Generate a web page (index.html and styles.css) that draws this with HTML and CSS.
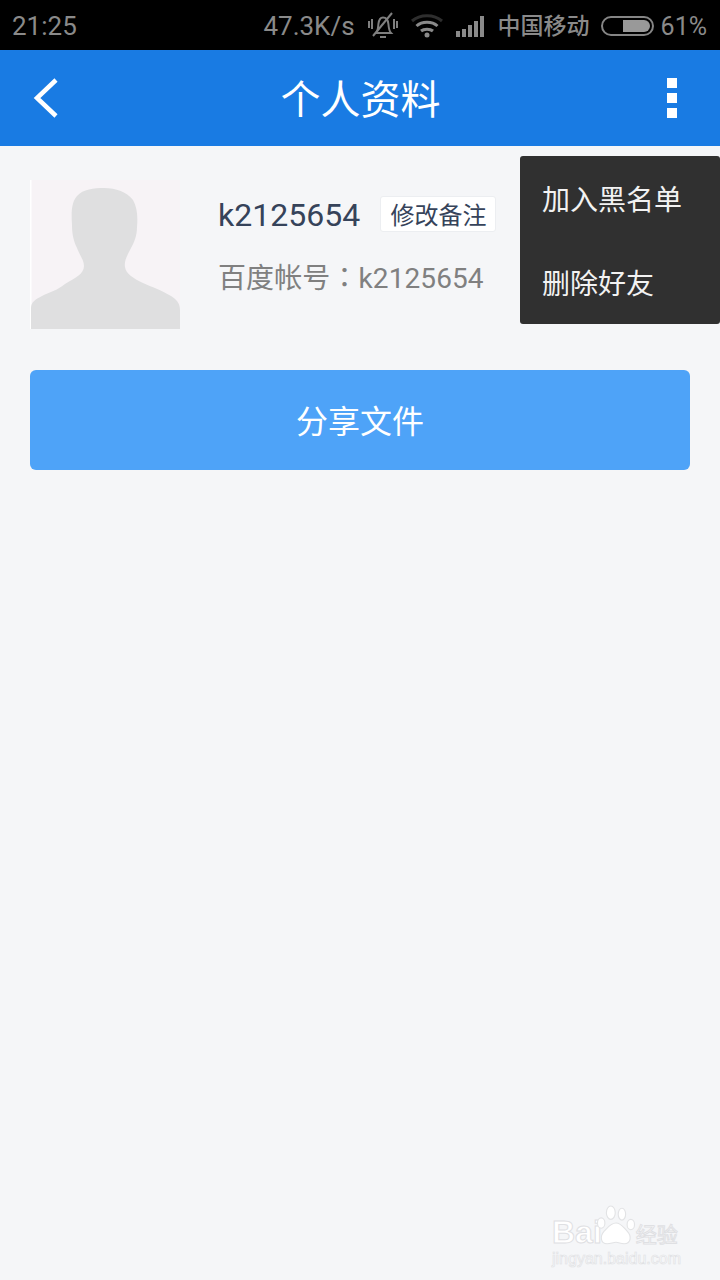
FILE: index.html
```html
<!DOCTYPE html>
<html lang="zh">
<head>
<meta charset="utf-8">
<title>个人资料</title>
<link rel="stylesheet" href="styles.css">
</head>
<body>
<div class="page">
  <div class="status">
    <span class="time">21:25</span>
    <div class="status-right">
      <span class="speed">47.3K/s</span>
      <svg class="ic-bell" width="30" height="28" viewBox="0 0 30 28" fill="none" stroke="#7f7f7f" stroke-width="2">
        <path d="M8 21c2-2 2-4 2.400-9 .5-4 2-6.500 4.600-6.500 3 0 5 2.500 5.400 6.500 .4 5 .6 7 2.600 9z"/>
        <path d="M12 25h6"/>
        <path d="M24 1L5 24"/>
        <path d="M1 9v7M4 7v10M26 7v10M29 9v7"/>
      </svg>
      <svg class="ic-wifi" width="32" height="24" viewBox="0 0 32 24" fill="none" stroke-width="3">
        <path d="M1 7C9 0 23 0 31 7" stroke="#2e2e2e"/>
        <path d="M5.500 12C11 7 21 7 26.500 12" stroke="#8a8a8a"/>
        <path d="M10 17C13 14.500 19 14.500 22 17" stroke="#8a8a8a"/>
        <circle cx="16" cy="21" r="2.500" fill="#8a8a8a" stroke="none"/>
      </svg>
      <div class="signal">
        <i class="b1"></i><i class="b2"></i><i class="b3"></i><i class="b4"></i><i class="b5"></i>
      </div>
      <span class="carrier">中国移动</span>
      <div class="battery"><i></i></div>
      <span class="pct">61%</span>
    </div>
  </div>
  <header class="bar">
    <svg class="back" width="26" height="40" viewBox="0 0 26 40" fill="none" stroke="#fff" stroke-width="4.500">
      <path d="M24 2L5 20l19 18"/>
    </svg>
    <h1 class="title">个人资料</h1>
    <div class="more"><i></i><i></i><i></i></div>
  </header>
  <main class="content">
    <section class="profile">
      <svg class="avatar" width="150" height="150" viewBox="0 0 150 150">
        <rect width="150" height="149" fill="#f7f3f6"/>
        <rect width="1.500" height="149" fill="#fff"/>
        <path fill="#dfdfe0" d="M1 149V128C1 122 6 119 12 116C20 112 28 110 35 104C45 98 54 94 54 86C54 80 50 76 47 68C43 60 42 52 42 45C41 30 42 22 47 16C53 9 64 8 74 8C86 8 97 12 103 20C107 27 108 36 107 47C107 56 104 63 100 70C97 76 94 81 95 87C96 94 103 98 113 103C122 107 131 110 141 116C146 119 150 123 150 130V149Z"/>
      </svg>
      <div class="info">
        <div class="name-row">
          <span class="name">k2125654</span>
          <span class="tag">修改备注</span>
        </div>
        <div class="account">百度帐号<span class="colon" lang="zh-Hant">：</span>k2125654</div>
      </div>
    </section>
    <button class="share">分享文件</button>
  </main>
  <nav class="menu">
    <div class="menu-item">加入黑名单</div>
    <div class="menu-item">删除好友</div>
  </nav>
  <div class="mark">
    <div class="mark-top">
      <span class="mark-bai">Bai</span>
      <svg class="mark-paw" width="54" height="60" viewBox="0 0 54 60" fill="#fff" stroke="#e2e3e5" stroke-width="1.500">
        <ellipse cx="7" cy="26" rx="5" ry="7"/>
        <ellipse cx="20" cy="12" rx="6" ry="9"/>
        <ellipse cx="35" cy="14" rx="5" ry="8"/>
        <ellipse cx="47" cy="28" rx="5" ry="7"/>
        <path d="M27 26c7 0 10 6 15 11 6 6 6 17-4 17-5 0-7-2-11-2s-7 2-12 2C6 54 5 44 11 37c5-5 9-11 16-11z"/>
      </svg>
      <span class="mark-jy">经验</span>
    </div>
    <div class="mark-url">jingyan.baidu.com</div>
  </div>
</div>
</body>
</html>
```
FILE: styles.css
```css
* { box-sizing: border-box; }
html, body { margin: 0; padding: 0; }
body { background: #f5f6f8; font-family: Roboto, "Noto Sans CJK SC", sans-serif; }
.page { position: relative; width: 720px; height: 1280px; overflow: hidden; background: #f5f6f8; }

.status { height: 50px; background: #000; color: #8a8a8a; display: flex; align-items: center; justify-content: space-between; padding: 2px 13px 0 12px; font-family: Roboto, "Noto Sans CJK SC", sans-serif; font-size: 26px; }
.status-right { display: flex; align-items: center; }
.speed { margin-right: 13px; }
.ic-bell { margin-right: 13px; }
.ic-wifi { margin-right: 13px; }
.signal { display: flex; align-items: flex-end; gap: 2px; height: 22px; margin-right: 14px; }
.signal i { display: block; width: 4px; background: #8a8a8a; }
.signal .b1 { height: 6px; }
.signal .b2 { height: 8px; }
.signal .b3 { height: 12px; }
.signal .b4 { height: 16px; }
.signal .b5 { height: 21px; }
.carrier { font-family: "Noto Sans CJK SC", sans-serif; font-size: 23px; font-weight: 500; line-height: 30px; padding-bottom: 4px; margin-right: 11px; }
.battery { width: 53px; height: 20px; border: 2px solid #858585; border-radius: 10px; padding: 2px 2px 2px 20px; margin-right: 7px; }
.battery i { display: block; height: 100%; background: #999; border-radius: 0 6px 6px 0; }
.pct { font-size: 25px; }

.bar { height: 96px; background: #197be3; display: flex; align-items: center; justify-content: space-between; padding: 0 43px 0 32px; }
.back { display: block; }
.title { margin: -2px 0 0 -4px; font-size: 40px; font-weight: 400; color: #fff; font-family: "Noto Sans CJK SC", sans-serif; }
.more { display: flex; flex-direction: column; gap: 5px; }
.more i { display: block; width: 10px; height: 10px; background: #fff; }

.content { padding: 34px 30px 0; }
.profile { display: flex; align-items: flex-start; }
.avatar { display: block; flex: none; }
.info { margin-left: 38px; padding-top: 12px; }
.name-row { display: flex; align-items: center; height: 44px; }
.name { font-size: 32px; color: #36435a; padding-top: 2px; }
.tag { margin-left: 20px; height: 36px; width: 116px; padding: 0 0 2px 1px; display: flex; align-items: center; justify-content: center; background: #fff; border: 1px solid #eceef1; border-radius: 3px; font-size: 24px; color: #36435a; font-family: "Noto Sans CJK SC", sans-serif; }
.account { margin-top: 20px; font-size: 28px; color: #808080; line-height: 40px; letter-spacing: .1px; }
.colon { font-family: "Noto Sans CJK TC", sans-serif; }

.share { display: block; width: 660px; height: 100px; margin-top: 40px; padding: 0 0 3px; border: 0; border-radius: 6px; background: #4ea3f8; color: #fff; font-size: 32px; font-family: "Noto Sans CJK SC", sans-serif; }

.menu { position: absolute; top: 156px; left: 520px; width: 200px; height: 168px; background: #303030; border-radius: 3px; }
.menu-item { height: 84px; padding-left: 22px; display: flex; align-items: center; color: #f2f2f2; font-size: 28px; font-family: "Noto Sans CJK SC", sans-serif; }

.mark { position: absolute; left: 552px; top: 1202px; width: 130px; }
.mark-top { display: flex; align-items: flex-end; height: 48px; }
.mark-bai { font-family: "Liberation Sans", sans-serif; font-weight: 700; font-size: 32px; line-height: 32px; margin-bottom: 2px; color: #fff; -webkit-text-stroke: 1px #dfe0e3; }
.mark-paw { width: 40px; height: 48px; margin-left: -6px; flex: none; }
.mark-jy { font-family: "Noto Sans CJK SC", sans-serif; font-size: 21px; line-height: 24px; margin: 0 0 5px 0; color: #fff; -webkit-text-stroke: 1px #dfe0e3; white-space: nowrap; }
.mark-url { font-family: "Liberation Sans", sans-serif; font-size: 16px; line-height: 18px; color: #fff; -webkit-text-stroke: .7px #e0e1e4; white-space: nowrap; }
```
